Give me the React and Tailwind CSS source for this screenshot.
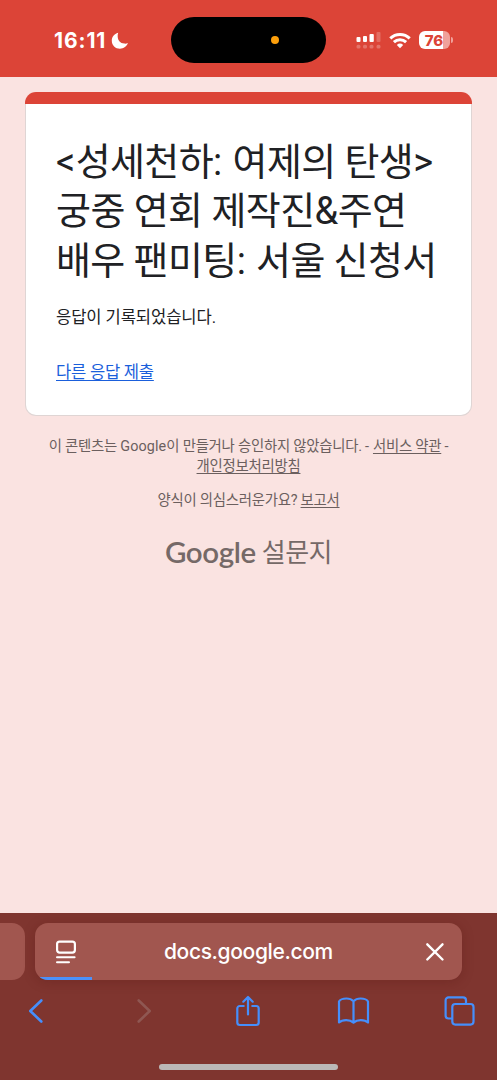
const korean = 'font-[Roboto,"Noto_Sans_CJK_KR",sans-serif]';

function StatusBar() {
  return (
    <header className="flex h-[77px] shrink-0 items-start bg-[#dc4437] text-white">
      <div className="flex h-[81px] w-[171px] items-center pl-[54px] font-[Inter,sans-serif]">
        <span className="w-[54px] whitespace-nowrap text-[21px] font-bold leading-none tracking-[0.9px]">16:11</span>
        <svg className="ml-[3px]" width="18" height="18" viewBox="0 0 18 18" fill="currentColor">
          <path d="M7.2.8C3.2 1.8.8 5 .8 8.7c0 4.6 3.6 8 8.1 8 3.8 0 6.9-2.2 8-5.6-1.3.5-2.4.7-3.6.5-4-.4-6.3-3.2-6.6-6.6C6.5 3.4 6.7 2.1 7.2.8Z" />
        </svg>
      </div>
      <div className="mt-[17px] flex h-[46px] w-[155px] items-center rounded-full bg-black">
        <span className="ml-[100px] size-2 rounded-full bg-[#fc9f0b]" />
      </div>
      <div className="flex h-20 flex-1 items-center pl-[30px]">
        <svg width="25" height="18" viewBox="0 0 25 18" fill="currentColor">
          <rect x="0.5" y="6" width="4" height="5" rx="1" />
          <rect x="7" y="5" width="4" height="6" rx="1" />
          <rect x="13.5" y="3" width="4.3" height="8" rx="1" />
          <rect x="20.5" y="1" width="4" height="10" rx="1" opacity=".22" />
          <g opacity=".25">
            <rect x="0.5" y="13.8" width="4" height="3.7" rx="1.5" />
            <rect x="7" y="13.8" width="4" height="3.7" rx="1.5" />
            <rect x="13.5" y="13.8" width="4" height="3.7" rx="1.5" />
            <rect x="20.5" y="13.8" width="4" height="3.7" rx="1.5" />
          </g>
        </svg>
        <svg className="ml-2" width="22" height="17" viewBox="0 0 22 17" fill="none" stroke="currentColor" strokeWidth="3">
          <path d="M1.3 6.4a14 14 0 0 1 19.4 0M4.9 10.1a8.8 8.8 0 0 1 12.2 0" />
          <path d="m11 16.2 3.2-3.3a4.7 4.7 0 0 0-6.4 0Z" fill="currentColor" stroke="none" />
        </svg>
        <div className="ml-2 flex h-[18px] w-[31px] items-center justify-center rounded-[6px] bg-linear-to-r from-white from-77% to-[#f0a19b] to-77% pr-px font-[Inter,sans-serif] text-[15px] font-extrabold leading-none tracking-[-0.1px] text-[#dc4437]">
          76
        </div>
        <span className="ml-px h-1.5 w-[2px] rounded-r-full bg-[#f0a19b]" />
      </div>
    </header>
  );
}

function FormCard() {
  return (
    <section className="mx-[25px] mt-[15px] h-[324px]">
      <div className="h-3 rounded-t-[11px] bg-[#dc4437]" />
      <div className="h-[312px] rounded-b-[11px] border border-t-0 border-[#dfd5d4] bg-white px-[30px] pt-[34px] text-[#202124]">
        <h1 className="whitespace-nowrap text-[38px] font-normal leading-[49.4px]">
          <span className="block tracking-[-0.6px]">
            <span className="tracking-[0.3px]">&lt;</span>성세천하<span className="tracking-[0.4px]">: </span>여제의 탄생&gt;
          </span>
          <span className="block tracking-[-0.55px]">궁중 연회 제작진&amp;주연</span>
          <span className="block tracking-[-0.6px]">배우 팬미팅<span className="tracking-[0.4px]">: </span>서울 신청서</span>
        </h1>
        <p className="mt-[20px] text-[16.6px] leading-6 tracking-[-0.1px]">응답이 기록되었습니다.</p>
        <a className="mt-[31px] block w-fit text-[16.6px] leading-6 tracking-[-0.25px] text-[#1a5fdb] underline underline-offset-2">다른 응답 제출</a>
      </div>
    </section>
  );
}

function Disclaimer() {
  return (
    <footer className="whitespace-nowrap text-center text-[14.4px] leading-5 tracking-[-0.25px] text-[#6b5f5e]">
      <p className="mt-[21px]">
        이 콘텐츠는 <span className="tracking-[0.1px]">Google</span>이 만들거나 승인하지 않았습니다. <span className="tracking-[0.2px]">- </span>
        <a className="underline underline-offset-2">서비스 약관</a> -
        <br />
        <a className="underline underline-offset-2">개인정보처리방침</a>
      </p>
      <p className="mt-[14px]">
        양식이 의심스러운가요? <a className="underline underline-offset-2">보고서</a>
      </p>
      <div className="mt-[23px] flex h-9 items-center justify-center gap-[6px] text-[#756967]">
        <span className="font-[Lato,sans-serif] text-[29.5px] font-semibold leading-9 tracking-[-0.4px]">Google</span>
        <span className="mt-0.5 text-[26px] leading-9 tracking-[-0.5px]">설문지</span>
      </div>
    </footer>
  );
}

function BrowserBar() {
  return (
    <nav className="flex h-[167px] shrink-0 flex-col bg-[#7f352f]">
      <div className="mt-[10px] flex h-[57px] gap-[10px]">
        <div className="w-[25px] rounded-r-[13px] bg-[#a1564f]" />
        <div className="flex w-[427px] flex-col overflow-hidden rounded-[13px] bg-[#a1564f] text-white shadow-[0_2px_12px_rgba(80,15,12,0.25)]">
          <div className="flex h-[54px] items-center pt-[3px]">
            <svg className="ml-5" width="22" height="24" viewBox="0 0 22 24" fill="none" stroke="currentColor" strokeWidth="2.2" strokeLinecap="round">
              <rect x="2.1" y="1.6" width="17.8" height="11" rx="2.5" />
              <path d="M2 17.3h17.6M2 22.3h12" strokeWidth="2" />
            </svg>
            <span className="ml-[87px] w-[170px] whitespace-nowrap font-[Inter,sans-serif] text-[21px] font-medium leading-none tracking-[-0.37px]">docs.google.com</span>
            <svg className="ml-[91px]" width="20" height="20" viewBox="0 0 20 20" fill="none" stroke="currentColor" strokeWidth="2.4" strokeLinecap="round">
              <path d="m2.3 2.3 15.2 15.2M17.5 2.3 2.3 17.5" />
            </svg>
          </div>
          <div className="h-[3px] w-[57px] bg-[#4b91fb]" />
        </div>
      </div>
      <div className="mt-[14px] flex h-[34px] shrink-0 items-center text-[#458ffc]">
        <svg className="ml-7" width="16" height="26" viewBox="0 0 16 26" fill="none" stroke="currentColor" strokeWidth="2.6" strokeLinecap="round" strokeLinejoin="round">
          <path d="M13.3 2.5 2.3 13l11 10.5" />
        </svg>
        <svg className="ml-[92px] text-[#8f5752]" width="16" height="26" viewBox="0 0 16 26" fill="none" stroke="currentColor" strokeWidth="2.6" strokeLinecap="round" strokeLinejoin="round">
          <path d="m2.7 2.5 11 10.5-11 10.5" />
        </svg>
        <svg className="ml-[83px]" width="26" height="32" viewBox="0 0 26 32" fill="none" stroke="currentColor" strokeWidth="2.2" strokeLinecap="round" strokeLinejoin="round">
          <path d="M8.7 11H4.8a2.5 2.5 0 0 0-2.5 2.5v14A2.5 2.5 0 0 0 4.8 30h16.4a2.5 2.5 0 0 0 2.5-2.5v-14a2.5 2.5 0 0 0-2.5-2.5h-3.9M13 19.5V2M8.3 6.7 13 2l4.7 4.7" />
        </svg>
        <svg className="ml-[76px]" width="33" height="28" viewBox="0 0 33 28" fill="none" stroke="currentColor" strokeWidth="2.2" strokeLinejoin="round">
          <path d="M16.5 4.3c-1.7-1.8-4.1-2.8-7-2.8C6 1.5 3 2.7 2 4.5v21c1.6-1.5 4.2-2.4 7.2-2.4 3.1 0 5.4.8 7.3 2.5 1.9-1.7 4.2-2.5 7.3-2.5 3 0 5.6.9 7.2 2.4v-21c-1-1.8-4-3-7.5-3-2.9 0-5.3 1-7 2.8Zm0 0v21.3" />
        </svg>
        <svg className="ml-[74px]" width="31" height="30" viewBox="0 0 31 30" fill="none" stroke="currentColor" strokeWidth="2.2">
          <path d="M8.3 22.5H4.6a3 3 0 0 1-3-3V4.4a3 3 0 0 1 3-3H19a3 3 0 0 1 3 3V8" />
          <rect x="8.3" y="8" width="21.2" height="20.6" rx="3" />
        </svg>
      </div>
      <div className="ml-[159px] mt-[36px] h-[6px] w-[179px] shrink-0 rounded-full bg-[#bbb8b7]" />
    </nav>
  );
}

export default function App() {
  return (
    <div className={`flex h-[1080px] w-[497px] flex-col overflow-hidden bg-[#fae3e1] ${korean}`}>
      <StatusBar />
      <main className="flex-1">
        <FormCard />
        <Disclaimer />
      </main>
      <BrowserBar />
    </div>
  );
}
